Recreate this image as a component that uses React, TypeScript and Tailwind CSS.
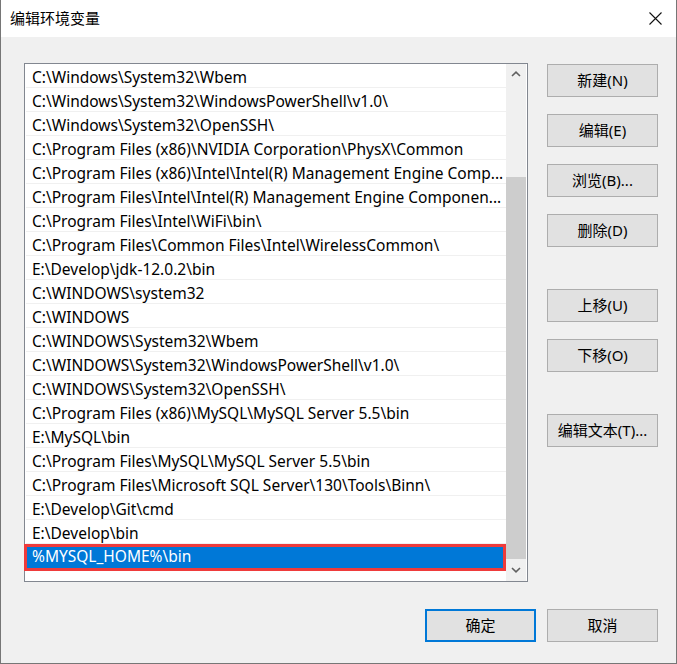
const paths = [
  "C:\\Windows\\System32\\Wbem",
  "C:\\Windows\\System32\\WindowsPowerShell\\v1.0\\",
  "C:\\Windows\\System32\\OpenSSH\\",
  "C:\\Program Files (x86)\\NVIDIA Corporation\\PhysX\\Common",
  "C:\\Program Files (x86)\\Intel\\Intel(R) Management Engine Comp...",
  "C:\\Program Files\\Intel\\Intel(R) Management Engine Componen...",
  "C:\\Program Files\\Intel\\WiFi\\bin\\",
  "C:\\Program Files\\Common Files\\Intel\\WirelessCommon\\",
  "E:\\Develop\\jdk-12.0.2\\bin",
  "C:\\WINDOWS\\system32",
  "C:\\WINDOWS",
  "C:\\WINDOWS\\System32\\Wbem",
  "C:\\WINDOWS\\System32\\WindowsPowerShell\\v1.0\\",
  "C:\\WINDOWS\\System32\\OpenSSH\\",
  "C:\\Program Files (x86)\\MySQL\\MySQL Server 5.5\\bin",
  "E:\\MySQL\\bin",
  "C:\\Program Files\\MySQL\\MySQL Server 5.5\\bin",
  "C:\\Program Files\\Microsoft SQL Server\\130\\Tools\\Binn\\",
  "E:\\Develop\\Git\\cmd",
  "E:\\Develop\\bin",
];

const Button = ({ label, primary = false, className = "" }: { label: string; primary?: boolean; className?: string }) => (
  <div
    className={
      "flex h-[33px] w-[111px] items-center justify-center bg-[#e1e1e1] text-[15px] text-black " +
      (primary ? "border-2 border-[#0078d7] " : "border border-[#adadad] ") +
      className
    }
  >
    {label}
  </div>
);

const Chevron = ({ down = false }: { down?: boolean }) => (
  <svg width="10" height="6" viewBox="0 0 10 6" className={down ? "rotate-180" : ""}>
    <path d="M1 5 L5 1.2 L9 5" fill="none" stroke="#606060" strokeWidth="1.6" />
  </svg>
);

export default function App() {
  return (
    <div className="flex h-[664px] w-[677px] flex-col border-x border-b border-[#767676] font-['Noto_Sans','Noto_Sans_CJK_SC',sans-serif]">
      {/* title bar */}
      <div className="flex h-[37px] shrink-0 items-center justify-between bg-white pl-[9px] pr-[14px]">
        <span className="text-[15px] text-black">编辑环境变量</span>
        <svg width="13" height="13" viewBox="0 0 13 13">
          <path d="M0.5 0.5 L12.5 12.5 M12.5 0.5 L0.5 12.5" stroke="#111" strokeWidth="1.1" />
        </svg>
      </div>

      <div className="flex flex-1 flex-col bg-[#f0f0f0] pl-[23px] pr-[18px] pt-[26px]">
        <div className="flex">
          {/* list */}
          <div className="flex h-[519px] w-[504px] border border-[#828790] bg-white">
            <div className="flex w-[481px] flex-col">
              {paths.map((p) => (
                <div key={p} className="ml-[1px] h-[24px] border-b border-[#f0f0f0] pl-[6px] pt-[1px]">
                  <span className="whitespace-nowrap text-[15.5px] leading-[23px] text-black">{p}</span>
                </div>
              ))}
              <div className="-ml-[1px] h-[27px] w-[482px] border-[3px] border-[#ef3b3b] bg-[#0078d7] pl-[5px] leading-[19px]">
                <span className="block whitespace-nowrap text-[15.5px] leading-[19px] text-white">%MYSQL_HOME%\bin</span>
              </div>
            </div>
            {/* scrollbar */}
            <div className="mr-[1px] flex w-[20px] flex-col bg-[#f0f0f0]">
              <div className="flex h-[20px] items-center justify-center">
                <Chevron />
              </div>
              <div className="h-[93px]" />
              <div className="h-[382px] bg-[#cdcdcd]" />
              <div className="flex h-[22px] items-center justify-center">
                <Chevron down />
              </div>
            </div>
          </div>

          {/* side buttons */}
          <div className="ml-[19px] mt-[1px] flex flex-col">
            <Button label="新建(N)" />
            <Button label="编辑(E)" className="mt-[17px]" />
            <Button label="浏览(B)..." className="mt-[17px]" />
            <Button label="删除(D)" className="mt-[17px]" />
            <Button label="上移(U)" className="mt-[42px]" />
            <Button label="下移(O)" className="mt-[17px]" />
            <Button label="编辑文本(T)..." className="mt-[42px]" />
          </div>
        </div>

        <div className="mt-[27px] flex justify-end gap-[11px]">
          <Button label="确定" primary />
          <Button label="取消" />
        </div>
      </div>
    </div>
  );
}
